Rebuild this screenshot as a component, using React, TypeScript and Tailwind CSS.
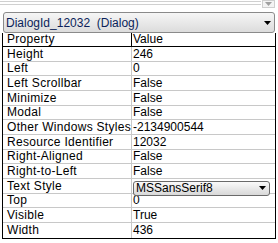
import React from "react";

const rows: [string, string][] = [
  ["Height", "246"],
  ["Left", "0"],
  ["Left Scrollbar", "False"],
  ["Minimize", "False"],
  ["Modal", "False"],
  ["Other Windows Styles", "-2134900544"],
  ["Resource Identifier", "12032"],
  ["Right-Aligned", "False"],
  ["Right-to-Left", "False"],
  ["Text Style", ""],
  ["Top", "0"],
  ["Visible", "True"],
  ["Width", "436"],
];

function Arrow({ color = "#000" }: { color?: string }) {
  return (
    <svg width="7" height="4" viewBox="0 0 7 4">
      <path d="M0 0 H7 L3.5 4 Z" fill={color} />
    </svg>
  );
}

export default function App() {
  return (
    <div
      className="w-[278px] h-[243px] bg-white overflow-hidden text-[12px] text-black"
      style={{ fontFamily: '"Liberation Sans", Arial, sans-serif' }}
    >
      {/* top strip */}
      <div className="flex h-[8px]">
        <div className="flex-1 mt-[1px] h-[4px] border-y border-[#d0d0d0]" />
        <div className="w-[13px] h-[8px] mr-[3px] ml-[1px] border border-[#cfcfcf] bg-[#f4f4f4] flex items-center justify-center">
          <svg width="7" height="4" viewBox="0 0 7 4">
            <path d="M0 0 H7 L3.5 4 Z" fill="#a0a0a0" />
          </svg>
        </div>
      </div>
      {/* dialog combobox */}
      <div className="mt-[4px] ml-[3px] w-[272px] h-[21px] rounded-[3px] border border-[#8a8a8a] bg-gradient-to-b from-[#f6f6f6] to-[#dcdcdc] flex items-center pl-[2px] pr-[3px]">
        <span className="flex-1 text-[#0b1f5a] leading-none">DialogId_12032&nbsp;&nbsp;(Dialog)</span>
        <Arrow />
      </div>
      {/* table */}
      <div className="ml-[2px] w-[274px] border-l border-r border-b border-black">
        <div className="flex h-[14px] border-b border-black leading-[13px]">
          <div className="w-[129px] pl-[4px] border-r border-black tracking-[0.3px]">Property</div>
          <div className="flex-1 pl-[1px]">Value</div>
        </div>
        {rows.map(([k, v], i) => (
          <div
            key={k}
            className="flex h-[14.67px] border-b border-[#c8c8c8] last:border-b-0"
          >
            <div className="w-[129px] pl-[4px] border-r border-[#c8c8c8] whitespace-nowrap overflow-hidden flex items-center tracking-[0.3px]">
              {k}
            </div>
            <div className="relative flex-1 pl-[1px] flex items-center whitespace-nowrap">
              {k === "Text Style" ? (
                <div className="absolute left-[1px] top-[2px] z-10 w-[137px] h-[15px] rounded-[3px] border border-[#6a6a6a] bg-gradient-to-b from-[#fafafa] to-[#d8d8d8] flex items-center pl-[2px] pr-[3px]">
                  <span className="flex-1 leading-none">MSSansSerif8</span>
                  <Arrow />
                </div>
              ) : (
                v
              )}
            </div>
          </div>
        ))}
      </div>
    </div>
  );
}
